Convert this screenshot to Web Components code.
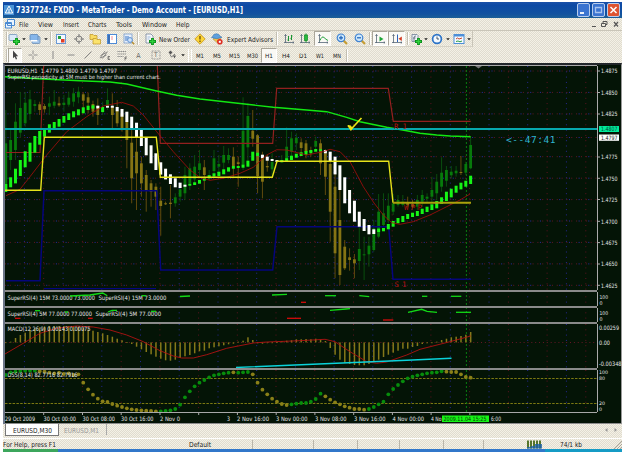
<!DOCTYPE html>
<html lang="en">
<head>
<meta charset="utf-8">
<title>MetaTrader</title>
<style>
  html, body { margin: 0; padding: 0; background: #fff; }
  body { font-family: "DejaVu Sans Condensed", "DejaVu Sans", sans-serif; overflow: hidden; }
</style>
</head>
<body>
<terminal-window></terminal-window>
<script>
'use strict';
(
  function () {

    const define = (name, css, html) => {
      customElements.define(name, class extends HTMLElement {
        constructor() {
          super();
          const shadow = this.attachShadow({ mode: 'open' });
          shadow.innerHTML = `<style>${css}</style>${html}`;
        }
      });
    };

    // ---------- small svg text with a fixed width ----------
    class FitLabel extends HTMLElement {
      constructor() {
        super();
        this.attachShadow({ mode: 'open' });
      }

      connectedCallback() {
        const w = this.getAttribute('w');
        const size = this.getAttribute('size') || 6.9;
        const weight = this.getAttribute('weight') || 400;
        this.shadowRoot.innerHTML = `
        <style>
          :host { display: inline-block; flex: none; height: 12px; }
          svg { display: block; overflow: visible; }
        </style>
        <svg width="${w}" height="12"><text x="0" y="8.5" fill="currentColor" font-size="${size}" font-weight="${weight}"
          textLength="${w}" lengthAdjust="spacingAndGlyphs">${this.getAttribute('text')}</text></svg>`;
      }
    }
    customElements.define('fit-label', FitLabel);

    // ---------- toolbar icons, 12x12 ----------
    const axes = '<path d="M2.5 1.5V10M1 9.5H11M1.5 3l1-1.5 1 1.5M9.8 8.5l1.2 1-1.2 1" stroke="#567" fill="none" stroke-width=".8"/>';
    const plus = '<path d="M8.5 5v7M5 8.5h7" stroke="#078a18" stroke-width="2.8"/><path d="M8.5 5.8v5.4M5.8 8.5h5.4" stroke="#2ed03a" stroke-width="1.4"/>';
    const lens = s => `<path d="M7.5 7.5l3.5 3.5" stroke="#c49a2c" stroke-width="2"/><circle cx="5" cy="4.8" r="3.8" fill="#cfe8fb" stroke="#3f83d2" stroke-width="1.2"/><path d="${s}" stroke="#1c62b8" stroke-width="1.2"/>`;
    const icons = {
      newchart: '<rect x="1" y="1.5" width="8" height="6" rx="1" fill="#dbe9f8" stroke="#7497bd" stroke-width=".8"/>' + plus,
      profiles: '<rect x="3" y="3.5" width="8" height="7" rx="1" fill="#9fc3ea" stroke="#6f8fb5" stroke-width=".8"/><rect x="1" y="1.5" width="8" height="6" rx="1" fill="#86b6ea" stroke="#5c86b5" stroke-width=".8"/><path d="M1.5 7h7v1.5h-7z" fill="#fff"/>',
      market: '<rect x="1.5" y="1.5" width="9" height="9" fill="#f4f8ff" stroke="#6b9ad5"/><path d="M3 3h3v3H3z" fill="#27a13c"/><path d="M6 6h3.5v3.5H6z" fill="#e33d25"/>',
      target: '<circle cx="6" cy="6" r="3" fill="none" stroke="#777" stroke-width=".9"/><path d="M6 1v3.5M6 7.5V11M1 6h3.5M7.5 6H11" stroke="#777"/>',
      folders: '<path d="M1 1.5h3l1 1h3v4H1z" fill="#f9dc62" stroke="#bd9324" stroke-width=".7"/><path d="M4 5.5h3l1 1h3.5v4.5H4z" fill="#fbe36d" stroke="#bd9324" stroke-width=".7"/>',
      panel: '<rect x="1.5" y="1.5" width="9" height="9" fill="#fff" stroke="#4d8ad6"/><path d="M2 2h2v8.5H2z" fill="#3b6fb5"/><path d="M5.5 4h1M5.5 6h1" stroke="#e23"/>',
      tester: '<rect x="1" y="1" width="8" height="9" fill="#e7effa" stroke="#7b9dcc" stroke-width=".8"/><path d="M3 3v5M5 3v4" stroke="#3a76c7"/><circle cx="7" cy="7" r="2.4" fill="#cfe3fa" stroke="#5c8fd0"/><path d="M9 9l2.2 2.2" stroke="#b98f31" stroke-width="1.5"/>',
      order: '<path d="M2 1h5l2 2v7H2z" fill="#f6f7fa" stroke="#76869c" stroke-width=".8"/><path d="M3.5 4h3M3.5 6h2" stroke="#7ba0d0" stroke-width=".7"/>' + plus,
      diamond: '<path d="M6 .8L11.2 6 6 11.2.8 6z" fill="#fcd537" stroke="#c4921a" stroke-width=".8"/><path d="M6 3v3.5M6 7.5V9" stroke="#5d4208" stroke-width="1.2"/>',
      expert: '<path d="M2 6l4 3.5 4-3.5-1.5-1.5h-5z" fill="#f1c24a" stroke="#a8822b" stroke-width=".5"/><path d="M.5 4.5Q2 3.5 2.8 1.5q3-1.600 5 0Q9 3.8 11 4.3 6 7 .5 4.5z" fill="#5ea0dd" stroke="#3b74ae" stroke-width=".6"/><circle cx="8.8" cy="8.8" r="2.8" fill="#dd2d21"/><rect x="7.8" y="7.8" width="2" height="2" fill="#fff"/>',
      bars: axes + '<path d="M5.5 3v5M4.5 7h1M8.5 2v5M7.5 5.5h1M8.5 3h1" stroke="#189432" fill="none"/>',
      candles: axes + '<path d="M7 .5v9" stroke="#0f8c24"/><rect x="5.5" y="2" width="3" height="5.5" fill="#27bb3d" stroke="#0f8c24" stroke-width=".7"/>',
      line: axes + '<path d="M3 7.500Q5 2.500 7 4.500t4 3" stroke="#2ba343" fill="none"/>',
      zoomin: lens('M3 4.8h4M5 2.8v4'),
      zoomout: lens('M3 4.8h4'),
      scroll: axes + '<path d="M5.5 3.5l4 2.5-4 2.5z" fill="#20a638"/>',
      shift: axes + '<path d="M6.5 1.5V9" stroke="#2d62bb"/><path d="M10.8 3.5L7.5 5.7l3.3 2.2z" fill="#d33a22"/>',
      indicators: '<path d="M2 1.5h5l1 1v6H2z" fill="#eef2f7" stroke="#708097" stroke-width=".8"/><path d="M6 3q-2-.5-2 2v3M3 5h2.5" stroke="#456" stroke-width=".7" fill="none"/>' + plus,
      clock: '<circle cx="6" cy="6" r="4.4" fill="#f3f9ff" stroke="#2d74c8" stroke-width="1.7"/><path d="M6 3.5V6h2" stroke="#234" fill="none" stroke-width=".8"/>',
      template: '<rect x="1" y="1.5" width="10" height="9" fill="#f6faff" stroke="#4d8fd8"/><path d="M1 2.5h10" stroke="#4d8fd8" stroke-width="2"/><path d="M3 6l1.5-1L6 6l3-1" stroke="#c3442c" fill="none"/><path d="M3 8.5l2-.5 2 .8 2-.8" stroke="#2a9b42" fill="none"/>',
      pointer: '<path d="M4 1.5v7.8L5.7 7.8l1.2 2.8 1.2-.6L7 7.3h2.2z" fill="#444"/>',
      cross: '<path d="M6 1.5v3.7M6 6.8v3.7M1.5 6h3.7M6.8 6h3.7" stroke="#888" stroke-width=".9"/>',
      vline: '<path d="M6 2v8" stroke="#888"/>',
      hline: '<path d="M2.5 6h7" stroke="#888"/>',
      trend: '<path d="M2.5 9.5l7-7" stroke="#888"/>',
      channel: '<path d="M1 9l5-7M3.5 9.5l5-7M1.5 6.5l6-3M1.5 9l6-3" stroke="#777" stroke-width=".8"/><path d="M11 7.5H9v3h2M9 9h1.5" stroke="#555" fill="none" stroke-width=".7"/>',
      fibo: '<path d="M1.5 2.5h9M1.5 5h9M1.5 7.5h6" stroke="#888" stroke-dasharray="1.2 .6"/><path d="M11 8H9v3.5M9 9.5h1.5" stroke="#555" fill="none" stroke-width=".7"/>',
      letter: '<text x="3.3" y="8.5" font-size="7" fill="#666">A</text>',
      label: '<rect x="2" y="2" width="8" height="8" fill="none" stroke="#888" stroke-width=".8" stroke-dasharray="1 .5"/><text x="3.9" y="8.4" font-size="6.5" fill="#666">T</text>',
      arrows: '<path d="M1.5 3.5l2-2 2 2-2 2zM6 6.5l3 0-1.5 3z" fill="#555"/><path d="M3 5.5l1.5 2.5L8 5" stroke="#777" fill="none"/>',
      caret: '<path d="M4.2 5.2h3.6L6 7.2z" fill="#222"/>'
    };

    class ToolItem extends HTMLElement {
      constructor() {
        super();
        this.attachShadow({ mode: 'open' });
      }

      connectedCallback() {
        const icon = this.getAttribute('icon');
        this.shadowRoot.innerHTML = `
        <style>
          :host { display: flex; flex: none; width: ${this.getAttribute('w')}px; height: 15px; align-items: center; justify-content: center; box-sizing: border-box; color: #555; }
          :host([pressed]) { background: #faf9f5; border: 1px solid; border-color: #aaa69a #fff #fff #aaa69a; }
          :host([sep]) { justify-content: flex-start; }
          i { display: block; width: 1px; height: 13px; margin-left: 2px; background: #c3bfb2; border-right: 1px solid #fff; }
          svg { display: block; flex: none; overflow: visible; }
        </style>
        ${this.hasAttribute('sep') ? '<i></i>' : icon ? `<svg width="12" height="12">${icons[icon]}</svg>` : '<slot></slot>'}`;
      }
    }
    customElements.define('tool-item', ToolItem);

    // builds a row of items from "icon:width" tokens, "*" marks a pressed one
    const row = spec => spec.trim().split(/\s+/).map(token => {
      const [name, w] = token.replace('*', '').split(':');
      const pressed = token.includes('*') ? 'pressed' : '';
      if (name === '|') return `<tool-item sep w="${w}"></tool-item>`;
      if (name[0] === '=') return `<tool-item ${pressed} w="${w}"><fit-label text="${name.slice(1)}" w="${name.length > 3 ? 11 : 8}" size="6"></fit-label></tool-item>`;
      return `<tool-item ${pressed} icon="${name}" w="${w}"></tool-item>`;
    }).join('');

    define('title-bar', `
      :host { display: flex; height: 16px; align-items: center; color: #fff; padding: 0 2px 0 1px;
        background: linear-gradient(#1a50a8, #0c49a4 20%, #12529f 75%, #1c5f96); }
      .logo { margin-right: 2px; }
      .gap { flex: 1; }
      .btn { display: block; width: 11px; height: 12px; margin-left: 2px; border: 1px solid #b9cdec; border-radius: 2px; background: #3b74d0; }
      .close { background: #dd5431; }
      svg { display: block; }`, `
      <svg class="logo" width="10" height="12"><rect y="1" width="10" height="10" fill="#4b93d6"/><path d="M5 2l3.7 7H1.3z" fill="none" stroke="#fff"/><path d="M5 5v4" stroke="#fff"/></svg>
      <fit-label w="227" size="8.4" weight="700" text="7337724: FXDD - MetaTrader - Demo Account - [EURUSD,H1]"></fit-label>
      <span class="gap"></span>
      <span class="btn"><svg width="11" height="12"><path d="M2 9h4" stroke="#fff" stroke-width="1.8"/></svg></span>
      <span class="btn"><svg width="11" height="12"><path d="M2.5 3.5h6v5h-6z" stroke="#a9c4ee" stroke-width="1.3" fill="none"/></svg></span>
      <span class="btn close"><svg width="11" height="12"><path d="M2.5 3l6 6M8.5 3l-6 6" stroke="#fff" stroke-width="1.5"/></svg></span>`);

    define('menu-bar', `
      :host { display: flex; height: 12px; align-items: center; color: #222; padding-left: 2px; border-bottom: 1px solid #c9c5b8; }
      fit-label { margin-left: 9.5px; }
      .win { margin-left: auto; display: block; margin-right: 1px; }`, `
      <svg width="10" height="10"><path d="M2.5.5h7v6h-7zM.5 3.5h6v5.5h-6z" fill="#eaf4ff" stroke="#4b8ad2"/><path d="M1 4.5h5" stroke="#4b8ad2"/></svg>
      <fit-label style="margin-left:4px" w="9.5" text="File"></fit-label>
      <fit-label w="15" text="View"></fit-label>
      <fit-label w="16" text="Insert"></fit-label>
      <fit-label w="18.5" text="Charts"></fit-label>
      <fit-label w="16" text="Tools"></fit-label>
      <fit-label w="25" text="Window"></fit-label>
      <fit-label w="13.5" text="Help"></fit-label>
      <svg class="win" width="31" height="10"><path d="M2 7.5h4M11.5 4.5h4v3h-4zM13 4.5v-2h4v3h-1.5" stroke="#555" fill="none"/><path d="M24 3l4 4.5M28 3l-4 4.5" stroke="#555" stroke-width="1.2"/></svg>`);

    define('tool-bars', `
      :host { display: block; height: 32px; }
      div { display: flex; align-items: center; height: 16px; padding-left: 1px; }
      .first { width: 470px; box-sizing: border-box; border-right: 1px solid #c9c5b8; border-bottom: 1px solid #d6d2c6; }
      fit-label { color: #222; }`, `
      <div class="first">${row('|:4 newchart:12 caret:7 profiles:16 caret:5 |:5 market:16 target:20 folders:12 panel:22 tester:12 |:8 order:14')}
        <tool-item w="34"><fit-label w="31" text="New Order"></fit-label></tool-item>
        ${row('diamond:17 expert:18')}
        <tool-item w="48"><fit-label w="46" text="Expert Advisors"></fit-label></tool-item>
        ${row('|:8 bars:14 candles:18 *line:17 zoomin:21 zoomout:15 |:5 *scroll:16 *shift:17 |:4 indicators:14 caret:6 clock:15 caret:7 template:15 caret:6')}
      </div>
      <div>${row('|:4 *pointer:14 cross:21 vline:20 hline:15 trend:19 channel:16 fibo:18 letter:16 label:18 arrows:15 caret:6 |:3 |:2 =M1:17 =M5:18 =M15:17 =M30:18 *=H1:16 =H4:17 =D1:17 =W1:18 =MN:15 |:5')}</div>`);

    // ---------- chart data ----------
    // values are in thirds of a pixel; the x of bar i is FIRST + i * STEP
    const FIRST = 5.8;
    const STEP = 4.842;
    const X = i => +(FIRST + i * STEP).toFixed(2);
    const parse = s => s.trim().split(/\s+/).map(p => p.split(',').map(Number));

    // smoothed bars: top, bottom
    const smooth = parse(`372,396 352,382 326,370 300,348 274,322 248,305 228,278 213,254 204,230 193,218 186,208 177,200
      168,188 160,180 154,172 148,166 142,160 137,150 136,146 137,145 141,156 137,143 137,143 141,154 147,170 155,186 170,208 188,234
      210,258 232,286 256,310 280,330 307,344 326,358 343,372 355,382 368,384 374,380 371,377 367,375 360,371 352,362 346,355
      340,350 335,348 328,343 322,335 318,326 318,324 314,323 302,320 275,302 278,288 284,294 290,302 297,303 300,306 300,307
      295,305 287,300 281,293 277,288 273,284 270,280 267,275 268,273 270,280 275,303 290,343 316,390 352,430 390,460 422,485
      455,500 477,513 495,523 508,522 506,516 504,514 492,508 483,500 474,490 468,486 462,477 458,471 453,468 446,462 440,456
      433,450 423,445 412,432 395,423 386,412 377,398 368,388 362,380 347,372`);
    const isWhite = i => i === 19 || (i >= 21 && i <= 37) || (i >= 53 && i <= 56) || (i >= 66 && i <= 76);

    // price bars: wick top, body top, body bottom, wick bottom
    const price = parse(`150,250,385,395 205,240,300,330 130,185,270,300 96,144,218,232 96,128,190,200 90,118,162,180 120,132,138,155
      125,133,150,165 132,138,148,158 110,130,140,165 90,125,137,145 110,130,136,140 105,128,135,155 95,113,134,140 84,100,125,140
      80,95,112,130 97,103,122,150 98,112,128,160 122,132,155,170 115,138,165,195 125,145,157,165 85,120,136,150 100,140,165,205
      120,152,190,200 148,160,205,215 180,185,240,325 200,248,355,430 235,275,340,450 290,310,370,410 330,345,390,455 360,370,395,440
      370,380,410,450 380,422,438,527 425,430,432,435 375,428,432,475 400,412,430,440 380,388,410,425 320,345,400,420 310,325,370,390
      285,320,358,370 270,310,330,350 300,322,345,390 330,345,352,360 270,295,333,340 285,312,320,335 258,285,308,330 265,285,300,310
      262,290,318,350 290,307,312,380 112,212,315,330 130,168,262,305 150,212,236,260 222,226,348,400 275,285,365,415 285,318,322,335
      280,306,328,350 300,303,306,310 285,300,305,308 202,260,298,305 215,235,275,290 220,233,250,270 235,247,264,280 240,250,277,295
      260,272,276,290 230,243,260,270 238,250,310,345 268,280,350,405 300,312,455,545 340,380,580,655 380,480,645,675 540,560,625,630
      565,592,600,632 582,598,610,655 495,567,603,630 530,583,586,660 530,557,583,620 480,505,570,575 402,455,530,535 400,460,495,500
      400,437,480,490 402,430,455,465 405,420,435,440 405,425,435,440 410,428,436,442 420,433,440,445 405,420,440,450 390,405,425,440
      400,410,416,430 350,390,410,430 342,365,400,420 292,338,380,395 318,330,362,380 318,335,346,355 318,332,340,350 288,336,338,345
      305,312,338,345 232,255,325,328`);
    const olive = new Set([7, 8, 11, 16, 17, 18, 19, 22, 23, 24, 25, 26, 27, 28, 29, 30, 31, 32, 33, 34, 41, 47, 48, 51, 52, 53, 54,
      61, 62, 63, 65, 66, 67, 68, 69, 70, 71, 72, 83, 84, 94]);

    const macd = [67, 65, 54, 45, 38, 30, 25, 22, 20, 18, 18, 18, 18, 18, 18, 20, 24, 28, 32, 36, 40, 45, 50, 56, 61, 66, 72, 80, 88, 96,
      103, 110, 116, 121, 122, 119, 114, 109, 105, 100, 94, 92, 85, 82, 79, 76, 73, 71, 65, 62, 52, 60, 70, 71, 69, 68, 66, 64, 62, 61,
      58, 58, 57, 58, 56, 59, 63, 84, 104, 119, 128, 132, 135, 136, 136, 132, 125, 119, 111, 104, 98, 92, 86, 86, 81, 78, 72, 70, 68,
      65, 60, 56, 52, 50, 48, 44, 36];
    const dss = [165, 157, 155, 153, 152, 152, 152, 154, 155, 158, 160, 158, 162, 160, 165, 163, 188, 208, 224, 236, 244, 246, 252, 257,
      261, 265, 268, 270, 271, 272, 273, 274, 274, 273, 271, 267, 254, 232, 214, 199, 188, 180, 172, 166, 163, 160, 158, 157, 158, 157,
      156, 163, 188, 209, 223, 236, 245, 252, 255, 253, 251, 249, 249, 245, 237, 221, 229, 239, 247, 253, 259, 263, 267, 267, 269, 267,
      261, 253, 245, 223, 207, 195, 184, 175, 170, 166, 163, 160, 158, 157, 154, 155, 156, 156, 163, 171, 173];
    const dssOlive = i => (i > 6 && i < 32) || i === 47 || (i > 50 && i < 59) || (i > 65 && i < 75) || i > 90;

    // ---------- drawing helpers ----------
    const line = (points, color, width = 1, extra = '') =>
      `<polyline points="${points}" fill="none" stroke="${color}" stroke-width="${width}" ${extra}/>`;
    const text = (x, y, w, value, color = '#e6e6e6', size = 6) =>
      `<text x="${x}" y="${y}" textLength="${w}" lengthAdjust="spacingAndGlyphs" font-size="${size}" fill="${color}">${value}</text>`;
    const mono = (x, y, w, value, color, size) =>
      `<text x="${x}" y="${y}" textLength="${w}" font-family="DejaVu Sans Mono, monospace" font-size="${size}" fill="${color}">${value}</text>`;

    const grid = (top, bottom) => {
      let out = '';
      for (let i = 1; i < 31; i++) {
        const x = (5 + i * 19.36).toFixed(1);
        out += `<path d="M${x} ${top}V${bottom}" stroke="${i % 2 ? '#2a2aa8' : '#6a1224'}" stroke-dasharray="1 4.3" stroke-width=".9"/>`;
      }
      return out;
    };

    const pricePane = () => {
      let out = grid(66, 291);
      for (let i = 0; i < 11; i++) {
        const y = i === 3 ? 137.5 : (71 + i * 21.43).toFixed(1);
        out += `<path d="M5 ${y}H597" stroke="#701629" stroke-dasharray="1 3.84" stroke-width=".9"/>
          <path d="M7.5 ${y}H597" stroke="#3030b8" stroke-dasharray="1 8.68" stroke-width=".9"/>`;
      }
      out += line('466.4,66 466.4,291', '#0a7d10', 1, 'stroke-dasharray="2 2"');
      price.forEach((p, i) => {
        const [a, b, c, d] = p.map(v => +(60 + v / 3).toFixed(1));
        const color = olive.has(i) ? '#857414' : '#077a0b';
        out += `<path d="M${X(i)} ${a}V${d}" stroke="${olive.has(i) ? '#6b500e' : '#0a5310'}" stroke-width=".9"/>
          <rect x="${X(i) - 1.4}" y="${b}" width="2.8" height="${Math.max(1, c - b)}" fill="${color}"/>`;
      });
      out += line('6,152.5 40,152.5 43.7,65', '#92201f', 1.1);
      out += line('157.3,65 160.3,143.3 272.7,143.3 276.7,88.3 388.3,88.3 393.3,121.3 470.7,121.3', '#92201f', 1.2);
      out += line('6,280.7 40,280.7 44,190.7 156.7,190.7 160.7,270 272.7,270 277,226.7 388.7,226.7 393,279.3 471,279.3', '#05057c', 1.5);
      out += line('44,288.7 156,288.7', '#05057c', 1.3);
      smooth.forEach(([a, b], i) => {
        out += `<rect x="${(X(i) - 1.5).toFixed(2)}" y="${(60 + a / 3).toFixed(1)}" width="3" height="${((b - a) / 3).toFixed(1)}" fill="${isWhite(i) ? '#fff' : '#16f516'}"/>`;
      });
      out += line('6,195.7 20,189.3 30,176.7 46.7,155 66.7,131.7 86.7,116.7 103.3,106 121.7,102.3 133.3,106 143.3,115 156.7,131.7 173.3,151.7 190,170 200,177.5 210,180.3 223.3,178.3 240,173.3 253.3,167.3 266.7,155 276.7,149.7 286.7,150 306.7,155 323.3,151.7 330,149.3 340,151.7 350,161.7 363.3,186.7 374,203 383.3,215 391.7,222.7 400,224.3 413.3,221.7 430,215 446.7,206.7 460,200 470,194', '#a80d0d', .8);
      out += line('5,76.7 43,79 80,80.7 110,82 126.7,84 156.7,91 176.7,95.3 200,99 233.3,102.7 273.3,107.3 306.7,110 326.7,111.7 346.7,117.3 360,121.7 386.7,127.3 406.7,130.7 420,133.3 436.7,135 450,136 470.7,136.7', '#12e712', 1.4);
      out += line('5,129 597,129', '#07a9ad', 1.8);
      out += line('5,190.3 40.7,190.3 44.3,137.3 156.3,137.3 160.3,177.3 272.3,177.3 277,161.3 388.7,161.3 393,202.7', '#e6e31b', 1.4);
      out += line('393,202.7 471,202.7', '#aaa00c', 2);
      out += line('348,125.5 351,129.3 361.5,118', '#ece518', 1.6) + '<path d="M347.5 125l3.3 6 2-2.5-2-3z" fill="#ece518"/>';
      out += '<path d="M475 66h7l-3.5 2.5z" fill="#777"/>';
      out += mono(394, 128.5, 13, 'R 1', '#b51010', 7.5) + mono(404, 210, 18, 'WPP', '#b51010', 7.5) + mono(394.5, 287, 12, 'S 1', '#b51010', 7.5);
      out += mono(506, 143.3, 49.5, '&lt;--47:41', '#2fb4d0', 9.5);
      out += text(7.5, 73, 109.5, 'EURUSD,H1&#160; 1.4779 1.4800 1.4779 1.4797');
      out += text(7.5, 79, 153, 'SuperRSI periodicity at 5M must be higher than current chart.', '#e6e6e6', 5.7);
      // price scale
      out += '<path d="M597.5 65V291" stroke="#aaa"/>';
      [['1.4875', 71], ['1.4850', 92.5], ['1.4825', 114], ['1.4775', 157], ['1.4750', 178.3], ['1.4725', 199.5], ['1.4700', 221.3],
        ['1.4675', 242.6], ['1.4650', 264], ['1.4625', 285.3]].forEach(([label, y]) => {
        out += `<path d="M598 ${y}h2" stroke="#aaa"/>` + text(601, y + 2.2, 16.5, label);
      });
      out += '<rect x="599" y="126" width="20" height="6" fill="#00ec9b"/><rect x="599" y="134.5" width="20" height="6.3" fill="#fff"/>';
      out += text(601, 131.2, 16.5, '1.4807', '#064a34') + text(601, 139.8, 16.5, '1.4797', '#222');
      return out;
    };

    const scaleEdge = (top, bottom) => `<path d="M597.5 ${top}V${bottom}" stroke="#aaa"/>`;

    const rsiPane = (top, label, width, label2, green, red) => `${grid(top, top + 16)}
      <path d="M466.4 ${top}v16" stroke="#0a7d10" stroke-dasharray="2 2"/>
      ${text(7.5, top + 9.3, width, label)}${text(width + 11, top + 9.3, width * .776, label2)}
      ${green.map(p => line(p, '#12d916', 1.3)).join('')}${red.map(p => line(p, '#d50b0b', 1.3)).join('')}
      ${scaleEdge(top, top + 16)}${text(599.5, top + 7.5, 8.5, '100', '#e6e6e6', 5)}${text(599.5, top + 13.6, 3, '0', '#e6e6e6', 5)}`;

    const rsiA = () => rsiPane(291, 'SuperRSI(4) 15M 73.0000 73.0000', 87.5, 'SuperRSI(4) 15M 73.0000',
      ['70,296 90,295 102.7,293 107.3,295.7', '141.5,295.7 146,295.7', '180,296.5 190,296', '272,295 287,294.3', '325,295.7 336,295.7', '359.3,295.7 369.3,296.7', '422,296.3 427.3,296.3', '451,296.3 461.3,296.3'],
      ['301,302.3 306,302.3']);
    const rsiB = () => rsiPane(307, 'SuperRSI(4) 5M 77.0000 77.0000', 84.5, 'SuperRSI(4) 5M 77.0000',
      ['35,310.7 40,310.7', '65,312 68,312', '108,312 112,310.3 117,310.3', '151,311.3 156,311.3', '330,310.3 346,309 350,308.7', '408,312.3 421.7,309.3 427,311.3 437,312.3', '456,312.3 471,312.3'],
      ['15,318.3 20.5,318.3', '88,318.3 92.7,318.3', '287,318.3 301,318.3', '383,320 393.3,320']);

    const macdPane = () => {
      let out = grid(324, 368);
      out += '<path d="M5 342.5H597" stroke="#701629" stroke-dasharray="1 2.87" stroke-width=".9"/>';
      out += '<path d="M466.4 324v44" stroke="#0a7d10" stroke-dasharray="2 2"/>';
      macd.forEach((v, i) => {
        const y = 320 + v / 3;
        out += `<rect x="${(X(i) - .7).toFixed(2)}" y="${Math.min(y, 342.4).toFixed(1)}" width="1.5" height="${Math.max(.8, Math.abs(y - 342.4)).toFixed(1)}" fill="#85781a"/>`;
      });
      out += line('5,354 23.3,343.3 40,333.3 56.7,328.3 76.7,326 93.3,327 110,330 126.7,335 143.3,341.7 160,350.7 173.3,356 181.7,358 193.3,358 206.7,354.7 226.7,348.3 253.3,343 266.7,342 300,340.7 325,339.3 335,341.7 350,351.7 366.7,361.7 376.7,363.3 386.7,362 406.7,355 420,349.3 450,341.7 470.7,336', '#b01212', .9);
      out += line('236,367.5 407,360.3 451.5,358.3', '#0ad3da', 1.4);
      out += text(7.5, 331.3, 83, 'MACD(12,26,9) 0.00143 0.00075');
      out += scaleEdge(324, 368) + text(599, 329.5, 20, '0.00259') + text(599, 344.5, 11, '0.00') + text(599, 366.3, 22.5, '-0.00348');
      return out;
    };

    const dssPane = () => {
      let out = grid(370, 412);
      out += '<path d="M5 378.5H597M5 403.5H597" stroke="#8a8414" stroke-dasharray="2.5 1.3" stroke-width=".9"/>';
      out += '<path d="M466.4 370v42" stroke="#0a7d10" stroke-dasharray="2 2"/>';
      dss.forEach((v, i) => {
        out += `<circle cx="${X(i)}" cy="${(320 + v / 3).toFixed(1)}" r="1.9" fill="${dssOlive(i) ? '#8a8018' : '#078c0c'}"/>`;
      });
      out += text(7.5, 377.3, 70, 'DSS(8,14) 82.7716 82.7916');
      out += scaleEdge(370, 412) + text(599, 374.4, 9, '100', '#e6e6e6', 4.8) + text(599, 380.4, 6, '80', '#e6e6e6', 4.8)
        + text(599, 405, 6, '20', '#e6e6e6', 4.8) + text(599, 411, 3, '0', '#e6e6e6', 4.8);
      return out;
    };

    const timeAxis = () => {
      let out = '';
      for (let i = 1; i < 13; i++) out += `<path d="M${(5 + i * 38.74).toFixed(1)} 413v2" stroke="#aaa"/>`;
      [[5, 30, '29 Oct 2009'], [43.5, 32.5, '30 Oct 00:00'], [82.5, 32.5, '30 Oct 08:00'], [121, 32.5, '30 Oct 16:00'], [160, 20, '2 Nov 0'],
        [227, 3, '3'], [237, 32, '2 Nov 16:00'], [276, 31.5, '3 Nov 00:00'], [315, 31.5, '3 Nov 08:00'], [354, 31.5, '3 Nov 16:00'],
        [392.5, 31.5, '4 Nov 00:00'], [431, 10.5, '4 No'], [491, 10, '6:00']].forEach(([x, w, label]) => {
        out += text(x, 421, w, label);
      });
      out += '<rect x="442" y="415.5" width="47" height="6.5" fill="#16f516"/>' + text(443.5, 421, 43, '2009.11.04 15:25', '#063a06', 5.8);
      return out;
    };

    // one strip of the chart window; "top" and "height" choose its part of the canvas
    const panes = { price: pricePane, rsiA: rsiA, rsiB: rsiB, macd: macdPane, dss: dssPane, time: timeAxis };

    class ChartPane extends HTMLElement {
      constructor() {
        super();
        this.attachShadow({ mode: 'open' });
      }

      connectedCallback() {
        const top = this.getAttribute('top');
        const height = this.getAttribute('height');
        this.shadowRoot.innerHTML = `
        <style>
          :host { display: block; height: ${height}px; }
          svg { display: block; }
        </style>
        <svg width="617" height="${height}" viewBox="5 ${top} 617 ${height}">${panes[this.getAttribute('kind')]()}</svg>`;
      }
    }
    customElements.define('chart-pane', ChartPane);

    define('chart-window', `
      :host { display: block; background: #041406; border-top: 2px solid #22262a; border-left: 2px solid #6c7688; border-right: 1px solid #999; }
      .edge { height: 1px; background: #a8a8a8; width: 592px; }
      .thick { height: 2px; background: #8a8a8a; }
      .last { height: 1px; background: #8c8c8c; }`, `
      <div class="edge"></div>
      <chart-pane kind="price" top="66" height="224"></chart-pane>
      <div class="edge thick"></div>
      <chart-pane kind="rsiA" top="292" height="14"></chart-pane>
      <div class="edge thick"></div>
      <chart-pane kind="rsiB" top="308" height="14"></chart-pane>
      <div class="edge thick"></div>
      <chart-pane kind="macd" top="324" height="44"></chart-pane>
      <div class="edge thick"></div>
      <chart-pane kind="dss" top="370" height="42"></chart-pane>
      <div class="edge"></div>
      <chart-pane kind="time" top="413" height="10"></chart-pane>
      <div class="last"></div>`);

    define('chart-tabs', `
      :host { display: flex; height: 14px; align-items: flex-start; color: #999; }
      span { display: flex; align-items: center; height: 11px; }
      .on { background: #fff; color: #222; width: 52px; margin-left: 2px; border: 1px solid #777; border-top: 0; justify-content: center; }
      .off { margin-left: 5px; padding-right: 7px; border-right: 1px solid #aaa; }
      svg { margin-left: auto; margin-right: 4px; }`, `
      <span class="on"><fit-label w="39" text="EURUSD,M30"></fit-label></span>
      <span class="off"><fit-label w="35" text="EURUSD,M1"></fit-label></span>
      <svg width="14" height="10"><path d="M3.5 4v4L1 6zM10.500 4v4L13 6z" fill="#999"/></svg>`);

    define('status-bar', `
      :host { display: flex; height: 11px; align-items: center; color: #222; border-top: 1px solid #fff; box-sizing: border-box; }
      i { width: 1px; height: 9px; background: #bab6aa; }
      .grip { margin-left: auto; }`, `
      <fit-label w="53" text="For Help, press F1"></fit-label>
      <fit-label style="margin-left:133px" w="22" text="Default"></fit-label>
      <i style="margin-left:41px"></i><i style="margin-left:60px"></i><i style="margin-left:43px"></i><i style="margin-left:41px"></i><i style="margin-left:43px"></i><i style="margin-left:39px"></i>
      <svg width="15" height="9" style="margin-left:43px"><path d="M0 4.5h15" stroke="#54742a" stroke-width="8" stroke-dasharray="2 1"/><path d="M0 7h4v-1h4V4h7v4.5H0z" fill="#1c62a8" opacity=".8"/></svg>
      <fit-label style="margin-left:18px" w="22" text="74/1 kb"></fit-label>
      <svg class="grip" width="9" height="10"><path d="M1 10l8-8M4 10l5-5M7 10l2-2" stroke="#aaa69a"/></svg>`);

    define('terminal-window', `
      :host { display: flex; flex-direction: column; width: 619px; height: 450px; padding: 2px 3px 0; overflow: hidden;
        background: repeating-conic-gradient(#f4f1e6 0 25%, #e0dccf 0 50%) 0 0 / 2px 2px content-box; }
      .task { height: 3px; background: linear-gradient(90deg, #3ca65c 0 55px, #3177ca 55px 542px, #159bc5 542px); }`, `
      <title-bar></title-bar>
      <menu-bar></menu-bar>
      <tool-bars></tool-bars>
      <chart-window></chart-window>
      <chart-tabs></chart-tabs>
      <status-bar></status-bar>
      <div class="task"></div>`);
  })();
</script>
</body>
</html>
